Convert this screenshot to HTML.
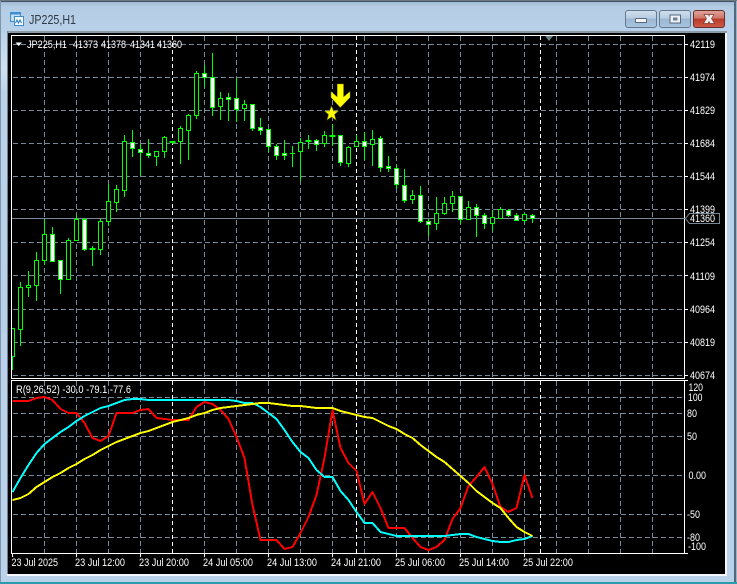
<!DOCTYPE html>
<html>
<head>
<meta charset="utf-8">
<title>JP225,H1</title>
<style>
html,body{margin:0;padding:0;background:#dfe6ee;width:737px;height:584px;overflow:hidden}
svg{display:block}
text{font-family:"Liberation Sans",sans-serif;font-size:11px;fill:#fff}
</style>
</head>
<body>
<svg width="737" height="584" viewBox="0 0 737 584" xmlns="http://www.w3.org/2000/svg">
<defs>
<linearGradient id="tb" x1="0" y1="0" x2="0" y2="1"><stop offset="0" stop-color="#9ab7d3"/><stop offset="0.06" stop-color="#9fbbd6"/><stop offset="0.2" stop-color="#b4cce4"/><stop offset="1" stop-color="#bad1ea"/></linearGradient>
<linearGradient id="bn" x1="0" y1="0" x2="0" y2="1"><stop offset="0" stop-color="#d0dfee"/><stop offset="0.45" stop-color="#b8cde2"/><stop offset="0.5" stop-color="#9cb7d2"/><stop offset="1" stop-color="#a9c4de"/></linearGradient>
<linearGradient id="rd" x1="0" y1="0" x2="0" y2="1"><stop offset="0" stop-color="#dfa69b"/><stop offset="0.45" stop-color="#cf7567"/><stop offset="0.5" stop-color="#b93a28"/><stop offset="1" stop-color="#cd5c48"/></linearGradient>
<linearGradient id="ls" x1="0" y1="0" x2="0" y2="1"><stop offset="0" stop-color="#bdd3ea"/><stop offset="0.12" stop-color="#d2e1f0"/><stop offset="0.2" stop-color="#bcd2ea"/><stop offset="1" stop-color="#b9d0ea"/></linearGradient>
</defs>

<!-- window -->
<path d="M3 0H734Q737 0 737 3V584H0V3Q0 0 3 0Z" fill="#bad1ea"/>
<rect x="0" y="0" width="737" height="33" fill="url(#tb)"/>
<rect x="1" y="33" width="6" height="548" fill="#bcd2ea"/>
<rect x="1" y="33" width="6" height="300" fill="url(#ls)"/>
<rect x="0" y="1" width="737" height="1" fill="#42525e"/>
<rect x="0" y="0" width="737" height="1" fill="#6c7a85"/>
<rect x="0" y="1" width="1" height="581" fill="#7f97ad"/>
<rect x="734" y="1" width="2" height="581" fill="#4f6a7d"/>
<rect x="736" y="1" width="1" height="581" fill="#9fb2c2"/>
<rect x="0" y="582" width="737" height="2" fill="#2c9bad"/>
<rect x="7" y="31" width="720" height="2" fill="#8b99a6"/>
<rect x="7" y="31" width="1" height="544" fill="#6f8090"/>
<rect x="7" y="574" width="720" height="2" fill="#f3f6fa"/>
<rect x="725" y="33" width="2" height="543" fill="#f3f6fa"/>
<rect x="8" y="33" width="717" height="541" fill="#000"/>

<!-- title -->
<g shape-rendering="crispEdges">
<rect x="10.5" y="12.5" width="10" height="9" fill="#c7dcf0" stroke="#3f8fd0"/>
<rect x="10.5" y="12.5" width="10" height="2" fill="#3f8fd0"/>
<rect x="14.5" y="16.5" width="9" height="9" fill="#f4f9fd" stroke="#3f8fd0"/>
</g>
<path d="M15.5 23L17 20L18.500 23L20 20L21.500 23" fill="none" stroke="#2e78b8" stroke-width="1"/>
<text x="29" y="24" style="font-size:13px;fill:#2e3a46" textLength="47" lengthAdjust="spacingAndGlyphs">JP225,H1</text>

<!-- buttons -->
<rect x="625.500" y="10.500" width="31" height="17" rx="2.500" fill="url(#bn)" stroke="#64798d"/>
<rect x="635.500" y="18.500" width="11" height="4" rx="0.500" fill="#f4f6f8" stroke="#56677a"/>
<rect x="659.500" y="10.500" width="31" height="17" rx="2.500" fill="url(#bn)" stroke="#64798d"/>
<rect x="670" y="15" width="10.500" height="8" fill="#eef2f6" stroke="#56677a"/>
<rect x="673" y="17.500" width="4.500" height="3" fill="#6d8296"/>
<rect x="693.500" y="10.500" width="31" height="17" rx="2.500" fill="url(#rd)" stroke="#6b2d2d"/>
<path d="M704 14.500L708.500 14.500L709 16L709.500 14.500L714 14.500L711.500 18.500L714.500 23.500L710 23.500L709 21.500L708 23.500L703.500 23.500L706.500 18.500Z" fill="#f3f3f3" stroke="#7d3a34" stroke-width="0.700"/>

<!-- grid -->
<g stroke="#778899" stroke-width="1" stroke-dasharray="5 3" fill="none" shape-rendering="crispEdges">
<path d="M13 44.500H685M13 77.500H685M13 110.500H685M13 143.500H685M13 176.500H685M13 209.500H685M13 242.500H685M13 275.500H685M13 309.500H685M13 342.500H685M13 375.500H685"/>
<path d="M13 397.500H685M13 413.500H685M13 436.500H685M13 475.500H685M13 514.500H685M13 537.500H685"/>
<path d="M44.500 36V378M76.500 36V378M108.500 36V378M140.500 36V378M204.500 36V378M236.500 36V378M268.500 36V378M300.500 36V378M332.500 36V378M364.500 36V378M396.500 36V378M428.500 36V378M460.500 36V378M492.500 36V378M524.500 36V378M556.500 36V378M588.500 36V378M620.500 36V378M652.500 36V378"/>
<path d="M44.500 381V553M76.500 381V553M108.500 381V553M140.500 381V553M204.500 381V553M236.500 381V553M268.500 381V553M300.500 381V553M332.500 381V553M364.500 381V553M396.500 381V553M428.500 381V553M460.500 381V553M492.500 381V553M524.500 381V553M556.500 381V553M588.500 381V553M620.500 381V553M652.500 381V553"/>
</g>
<g stroke="#fff" stroke-width="1" stroke-dasharray="4 3" fill="none" shape-rendering="crispEdges">
<path d="M172.500 36V378M356.500 36V378M540.500 36V378M172.500 381V553M356.500 381V553M540.500 381V553"/>
</g>

<!-- frame -->
<g fill="none" stroke="#fff" stroke-width="1" shape-rendering="crispEdges">
<rect x="11.500" y="35.500" width="673" height="343"/>
<rect x="11.500" y="380.500" width="673" height="173"/>
<path d="M685 44.500H688M685 77.500H688M685 110.500H688M685 143.500H688M685 176.500H688M685 209.500H688M685 242.500H688M685 275.500H688M685 309.500H688M685 342.500H688M685 375.500H688"/>
<path d="M685 380.500H688M685 553.500H688"/>
<path d="M12.500 553V557M76.500 553V557M140.500 553V557M204.500 553V557M268.500 553V557M332.500 553V557M396.500 553V557M460.500 553V557M524.500 553V557"/>
</g>
<path d="M545 36H553L549 41Z" fill="#6b8089"/>
<path d="M15.500 42.500H22L18.750 46Z" fill="#fff"/>

<!-- price line -->
<rect x="12" y="218" width="673" height="1" fill="#778899"/>

<!-- candles -->
<g fill="none" stroke="#00ff00" stroke-width="1" shape-rendering="crispEdges">
<path d="M12.500 356V370M20.500 282V346M28.500 271V297M36.500 252V301M44.500 219V265M52.500 227V262M60.500 260V294M68.500 238V280M76.500 215V241M84.500 218V251M92.500 246V266M100.500 219V255M108.500 184V226M116.500 185V212M124.500 135V197M132.500 130V157M140.500 144V176M148.500 139V158M156.500 151V166M164.500 136V158M172.500 141V144M180.500 126V164M188.500 114V160M196.500 71V119M204.500 65V87M212.500 53V116M220.500 92V120M228.500 93V121M236.500 78V122M244.500 100V121M252.500 104V131M260.500 118V135M268.500 129V152M276.500 144V160M284.500 140V160M292.500 146V167M300.500 138V181M308.500 135V149M316.500 139V151M324.500 131V147M332.500 124V146M340.500 135V166M348.500 146V167M356.500 135V147M364.500 132V160M372.500 130V166M380.500 136V172M388.500 156V172M396.500 165V189M404.500 169V203M412.500 190V204M420.500 186V223M428.500 219V236M436.500 197V230M444.500 197V215M452.500 191V212M460.500 196V224M468.500 201V220M476.500 204V237M484.500 213V229M492.500 210V231M500.500 207V219M508.500 209V217M516.500 213V221M524.500 213V223M532.500 214V223"/>
<path fill="#000" d="M12 328.500H14.500V356.500H12M18.500 287.500h4v42h-4zM26.500 285.500h4v2h-4zM34.500 260.500h4v25h-4zM42.500 234.500h4v26h-4zM66.500 240.500h4v39h-4zM74.500 219.500h4v21h-4zM98.500 221.500h4v28h-4zM106.500 201.500h4v20h-4zM114.500 189.500h4v13h-4zM122.500 141.500h4v49h-4zM154.500 151.500h4v5h-4zM162.500 137.500h4v14h-4zM178.500 128.500h4v13h-4zM186.500 115.500h4v15h-4zM194.500 73.500h4v42h-4zM218.500 98.500h4v8h-4zM242.500 104.500h4v4h-4zM298.500 142.500h4v9h-4zM322.500 135.500h4v8h-4zM346.500 147.500h4v16h-4zM354.500 141.500h4v5h-4zM370.500 139.500h4v5h-4zM410.500 195.500h4v4h-4zM434.500 213.500h4v10h-4zM442.500 203.500h4v10h-4zM450.500 196.500h4v7h-4zM466.500 207.500h4v12h-4zM490.500 217.500h4v6h-4zM498.500 209.500h4v9h-4zM522.500 214.500h4v6h-4z"/>
<path fill="#fff" d="M50.500 234.500h4v27h-4zM58.500 260.500h4v19h-4zM82.500 219.500h4v30h-4zM130.500 142.500h4v6h-4zM138.500 149.500h4v3h-4zM146.500 153.500h4v2h-4zM202.500 73.500h4v4h-4zM210.500 77.500h4v30h-4zM226.500 97.500h4v2h-4zM234.500 98.500h4v11h-4zM250.500 104.500h4v24h-4zM258.500 127.500h4v3h-4zM266.500 129.500h4v17h-4zM274.500 146.500h4v9h-4zM282.500 153.500h4v2h-4zM314.500 140.500h4v4h-4zM338.500 135.500h4v27h-4zM362.500 141.500h4v5h-4zM378.500 138.500h4v29h-4zM386.500 166.500h4v2h-4zM394.500 168.500h4v16h-4zM402.500 185.500h4v15h-4zM418.500 195.500h4v26h-4zM426.500 221.500h4v3h-4zM458.500 196.500h4v23h-4zM474.500 207.500h4v8h-4zM482.500 215.500h4v8h-4zM506.500 210.500h4v5h-4zM514.500 215.500h4v5h-4zM530.500 215.500h4v3h-4z"/>
<path d="M90 248.500h5v1h-5zM170 141.500h5v1h-5zM290 153.500h5M306 140.500h5v1h-5zM330 135.500h5v1h-5z"/>
</g>

<!-- star + arrow -->
<path d="M331.500 106L333.500 111L338.500 111L334.500 114.500L336 120L331.500 117L327 120L328.500 114.500L324.500 111L329.500 111Z" fill="#ffff00" stroke="#6e6e00" stroke-width="0.600"/>
<path d="M337.300 84H343.500V97L350 91.500V97.500L340.300 107.500L331 97.500V91.500L337.300 97Z" fill="#ffff00" stroke="#8a8a00" stroke-width="0.500"/>

<!-- indicator lines -->
<g fill="none" stroke-width="2" stroke-linejoin="round" shape-rendering="crispEdges">
<polyline stroke="#ff0000" points="12.500,401 20.500,401 28.500,401 36.500,398 44.500,397 52.500,400 60.500,409 68.500,413 76.500,413 84.500,423 92.500,438 100.500,441 108.500,436 116.500,413 124.500,413 132.500,413 140.500,410 148.500,409 156.500,418 164.500,419 172.500,420 180.500,420 188.500,420 196.500,407 204.500,402 212.500,404 220.500,410 228.500,419 236.500,437 244.500,458 252.500,505 260.500,540 268.500,540 276.500,540 284.500,549 292.500,547 300.500,533 308.500,517 316.500,495 324.500,458 332.500,410 340.500,448 348.500,463 356.500,471 364.500,504 372.500,492 380.500,508 388.500,528 396.500,528 404.500,528 412.500,538 420.500,547 428.500,550 436.500,547 444.500,540 452.500,519 460.500,508 468.500,486 476.500,477 484.500,467 492.500,484 500.500,507 508.500,512 516.500,508 524.500,475 532.500,498"/>
<polyline stroke="#00ffff" points="12.500,492 20.500,478 28.500,465 36.500,453 44.500,444 52.500,438 60.500,432 68.500,427 76.500,421 84.500,416 92.500,412 100.500,408 108.500,406 116.500,403 124.500,400 132.500,399 140.500,399 148.500,400 156.500,400 164.500,400 172.500,400 180.500,400 188.500,400 196.500,400 204.500,400 212.500,400 220.500,400 228.500,400 236.500,401 244.500,403 252.500,403 260.500,407 268.500,413 276.500,419 284.500,430 292.500,442 300.500,452 308.500,458 316.500,470 324.500,477 332.500,477 340.500,491 348.500,500 356.500,512 364.500,523 372.500,523 380.500,532 388.500,534 396.500,536 404.500,536 412.500,536 420.500,536 428.500,536 436.500,536 444.500,536 452.500,535 460.500,534 468.500,534 476.500,537 484.500,539 492.500,541 500.500,542 508.500,542 516.500,540 524.500,539 532.500,536"/>
<polyline stroke="#ffff00" points="12.500,500 20.500,498 28.500,494 36.500,487 44.500,482 52.500,477 60.500,473 68.500,468 76.500,464 84.500,459 92.500,455 100.500,450 108.500,446 116.500,442 124.500,439 132.500,436 140.500,433 148.500,431 156.500,428 164.500,425 172.500,422 180.500,420 188.500,418 196.500,415 204.500,413 212.500,410 220.500,408 228.500,407 236.500,406 244.500,405 252.500,404 260.500,403 268.500,403 276.500,404 284.500,405 292.500,406 300.500,406 308.500,407 316.500,408 324.500,408 332.500,408 340.500,411 348.500,413 356.500,415 364.500,417 372.500,418 380.500,422 388.500,426 396.500,429 404.500,434 412.500,438 420.500,445 428.500,451 436.500,457 444.500,462 452.500,469 460.500,476 468.500,483 476.500,491 484.500,497 492.500,503 500.500,508 508.500,518 516.500,527 524.500,532 532.500,536"/>
</g>

<!-- header text -->
<text x="27" y="48" textLength="40" lengthAdjust="spacingAndGlyphs">JP225,H1</text>
<text x="73" y="48" textLength="25" lengthAdjust="spacingAndGlyphs">41373</text>
<text x="101" y="48" textLength="25" lengthAdjust="spacingAndGlyphs">41378</text>
<text x="130" y="48" textLength="25" lengthAdjust="spacingAndGlyphs">41341</text>
<text x="157" y="48" textLength="25" lengthAdjust="spacingAndGlyphs">41360</text>
<text x="16" y="393" textLength="115" lengthAdjust="spacingAndGlyphs">R(9,26,52) -30.0 -79.1 -77.6</text>

<!-- price axis -->
<text x="690" y="48" textLength="25" lengthAdjust="spacingAndGlyphs">42119</text>
<text x="690" y="81" textLength="25" lengthAdjust="spacingAndGlyphs">41974</text>
<text x="690" y="114" textLength="25" lengthAdjust="spacingAndGlyphs">41829</text>
<text x="690" y="147" textLength="25" lengthAdjust="spacingAndGlyphs">41684</text>
<text x="690" y="180" textLength="25" lengthAdjust="spacingAndGlyphs">41544</text>
<text x="690" y="213" textLength="25" lengthAdjust="spacingAndGlyphs">41399</text>
<text x="690" y="246" textLength="25" lengthAdjust="spacingAndGlyphs">41254</text>
<text x="690" y="280" textLength="25" lengthAdjust="spacingAndGlyphs">41109</text>
<text x="690" y="313" textLength="25" lengthAdjust="spacingAndGlyphs">40964</text>
<text x="690" y="346" textLength="25" lengthAdjust="spacingAndGlyphs">40819</text>
<text x="690" y="379" textLength="25" lengthAdjust="spacingAndGlyphs">40674</text>
<path d="M685.500 218.500L689.500 213.500H719.500V223.500H689.500Z" fill="#000" stroke="#778899"/>
<text x="690" y="222" textLength="25" lengthAdjust="spacingAndGlyphs">41360</text>

<!-- indicator axis -->
<text x="688.500" y="391" textLength="14.500" lengthAdjust="spacingAndGlyphs">120</text>
<text x="688" y="401" textLength="14.500" lengthAdjust="spacingAndGlyphs">100</text>
<text x="687" y="417" textLength="10" lengthAdjust="spacingAndGlyphs">80</text>
<text x="687" y="440" textLength="10" lengthAdjust="spacingAndGlyphs">50</text>
<text x="688.500" y="479" textLength="17.500" lengthAdjust="spacingAndGlyphs">0.00</text>
<text x="687" y="518" textLength="13" lengthAdjust="spacingAndGlyphs">-50</text>
<text x="687" y="541" textLength="13" lengthAdjust="spacingAndGlyphs">-80</text>
<text x="688" y="550" textLength="18" lengthAdjust="spacingAndGlyphs">-100</text>

<!-- time axis -->
<text x="11.500" y="566" textLength="46.500" lengthAdjust="spacingAndGlyphs">23 Jul 2025</text>
<text x="75" y="566" textLength="50" lengthAdjust="spacingAndGlyphs">23 Jul 12:00</text>
<text x="139" y="566" textLength="50" lengthAdjust="spacingAndGlyphs">23 Jul 20:00</text>
<text x="203" y="566" textLength="50" lengthAdjust="spacingAndGlyphs">24 Jul 05:00</text>
<text x="267" y="566" textLength="50" lengthAdjust="spacingAndGlyphs">24 Jul 13:00</text>
<text x="331" y="566" textLength="50" lengthAdjust="spacingAndGlyphs">24 Jul 21:00</text>
<text x="395" y="566" textLength="50" lengthAdjust="spacingAndGlyphs">25 Jul 06:00</text>
<text x="459" y="566" textLength="50" lengthAdjust="spacingAndGlyphs">25 Jul 14:00</text>
<text x="523" y="566" textLength="50" lengthAdjust="spacingAndGlyphs">25 Jul 22:00</text>
</svg>
</body>
</html>
